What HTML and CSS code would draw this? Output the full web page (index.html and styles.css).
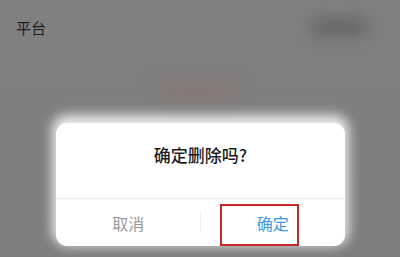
FILE: index.html
```html
<!DOCTYPE html>
<html lang="zh">
<head>
<meta charset="utf-8">
<link rel="stylesheet" href="styles.css">
</head>
<body>
<div class="page">
  <div class="header">
    <span class="title">平台</span>
    <span class="blob-dark"></span>
  </div>
  <div class="middle">
    <span class="blob-red"></span>
  </div>
  <div class="dialog">
    <div class="dialog-msg">确定删除吗?</div>
    <div class="dialog-actions">
      <div class="btn btn-cancel">取消</div>
      <div class="btn btn-ok">确定<span class="highlight"></span></div>
    </div>
  </div>
</div>
</body>
</html>
```

FILE: styles.css
```css
html, body {
  margin: 0;
  padding: 0;
}
body {
  width: 400px;
  height: 257px;
  overflow: hidden;
  background: #7f7f7f;
  font-family: "Noto Sans CJK SC", "Noto Sans", sans-serif;
}
.page {
  display: flex;
  flex-direction: column;
  height: 257px;
  background: linear-gradient(#808080, #7d7d7d);
}
.header {
  display: flex;
  justify-content: space-between;
  align-items: flex-start;
  padding: 18px 32px 0 16px;
  height: 40px;
}
.title {
  font-size: 15px;
  line-height: 20px;
  color: #1e1e1e;
}
.blob-dark {
  width: 58px;
  height: 18px;
  margin-top: 0;
  border-radius: 10px;
  background: #666;
  filter: blur(8px);
}
.middle {
  display: flex;
  justify-content: center;
  height: 65px;
}
.blob-red {
  width: 80px;
  height: 20px;
  margin-top: 22px;
  margin-left: -5px;
  border-radius: 10px;
  background: #877878;
  filter: blur(8px);
}
.dialog {
  margin-left: 56px;
  width: 289px;
  background: #fff;
  border-radius: 11px;
  box-shadow: 0 -4px 12px 4px rgba(255,255,255,0.85), 0 1px 3px rgba(0,0,0,0.1);
}
.dialog-msg {
  text-align: center;
  font-size: 17px;
  font-weight: 500;
  line-height: 20px;
  color: #1c1c1c;
  padding: 22px 0 33px 0;
  border-bottom: 1px solid #ececec;
}
.dialog-actions {
  display: flex;
  height: 47px;
}
.btn {
  flex: 1;
  display: flex;
  align-items: center;
  justify-content: center;
  font-size: 16px;
  position: relative;
}
.btn-cancel {
  color: #9a9a9a;
}
.btn-cancel::after {
  content: "";
  position: absolute;
  right: 0;
  top: 12px;
  height: 22px;
  border-right: 1px solid #eeeeee;
}
.btn-ok {
  color: #3a97e4;
}
.highlight {
  position: absolute;
  left: 19px;
  top: 5px;
  width: 75px;
  height: 38px;
  border: 2px solid #c9282b;
}
```
